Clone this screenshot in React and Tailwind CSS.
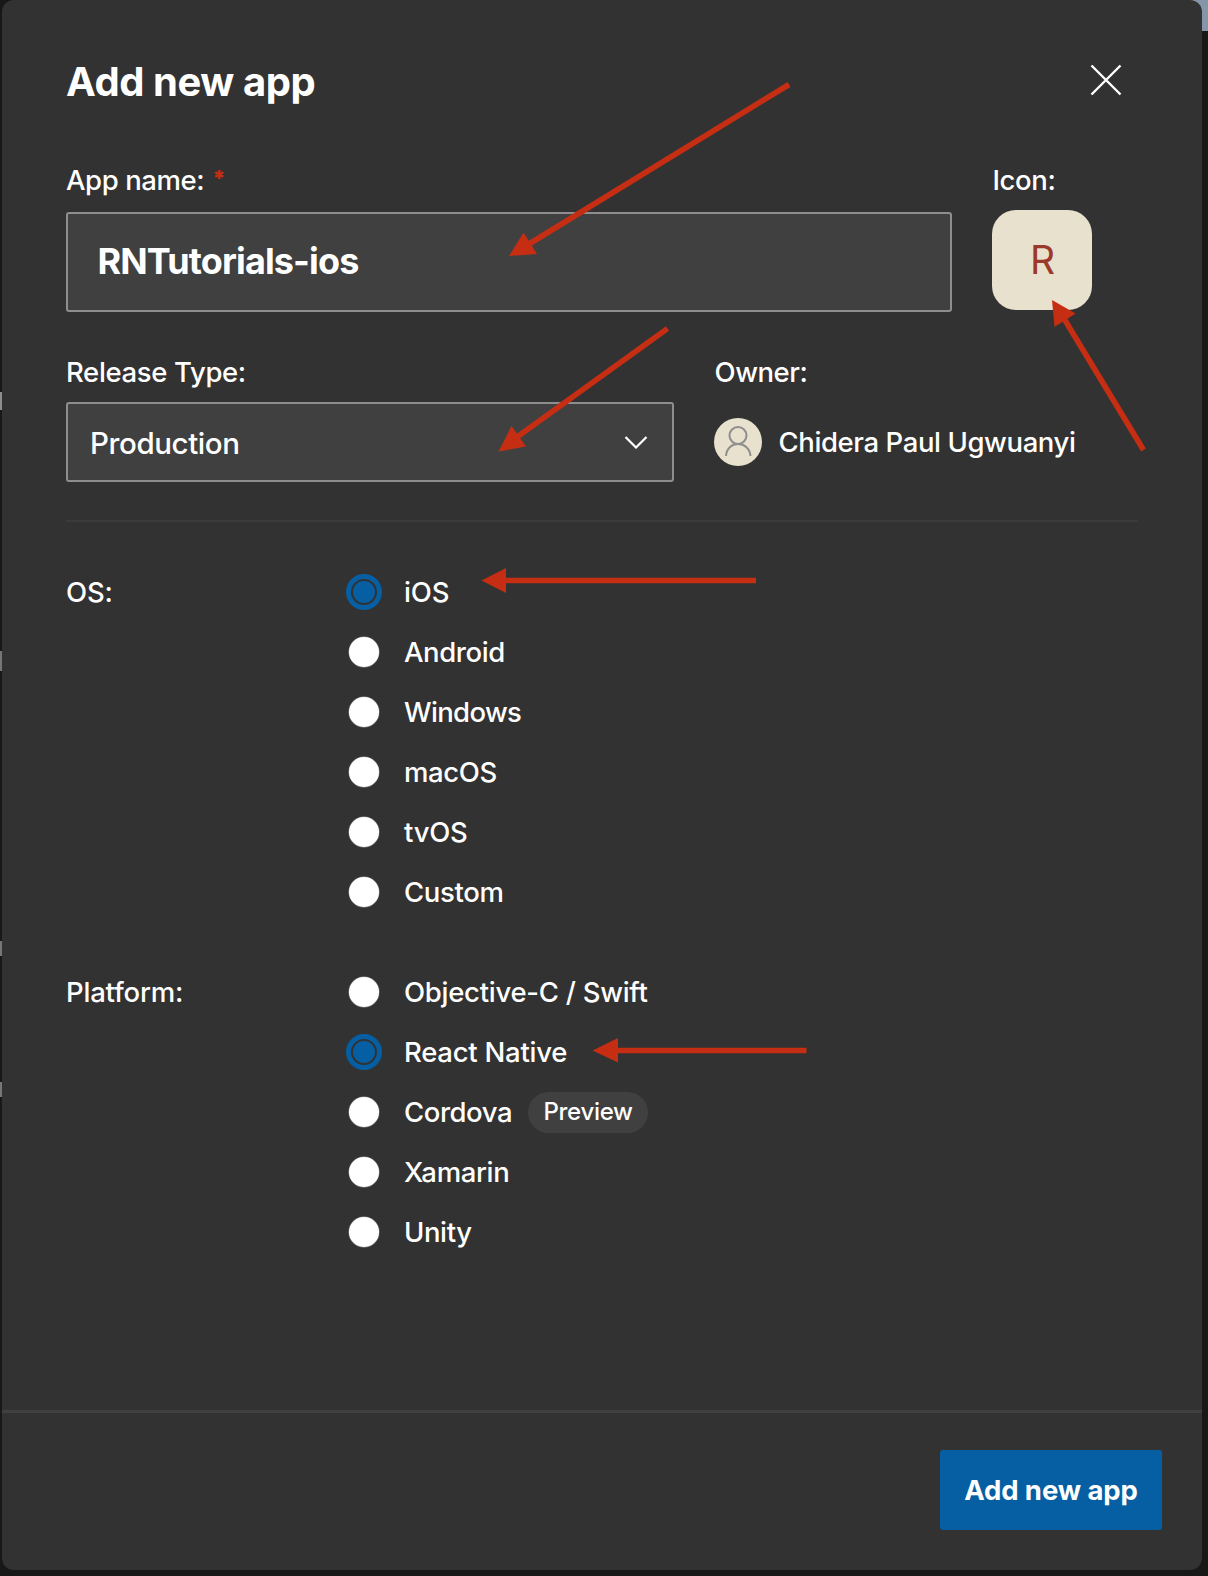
const OS_OPTIONS = [
  { label: "iOS", checked: true, spacing: "tracking-[-0.1px]" },
  { label: "Android", spacing: "tracking-[-0.4px]" },
  { label: "Windows", spacing: "tracking-[-0.65px]" },
  { label: "macOS", spacing: "tracking-[-0.35px]" },
  { label: "tvOS", spacing: "tracking-[-0.25px]" },
  { label: "Custom", spacing: "tracking-[-0.35px]" },
];

const PLATFORM_OPTIONS = [
  { label: "Objective-C / Swift", spacing: "tracking-[-0.27px]" },
  { label: "React Native", checked: true, spacing: "tracking-[-0.25px]" },
  { label: "Cordova", badge: "Preview", spacing: "tracking-[-0.45px]" },
  { label: "Xamarin", spacing: "tracking-[-0.35px]" },
  { label: "Unity", spacing: "tracking-[-0.4px]" },
];

function Radio({ checked }) {
  if (checked) {
    return (
      <span className="flex size-[36px] items-center justify-center rounded-full border-[5px] border-[#065fa3]">
        <span className="size-[22px] rounded-full bg-[#065fa3]" />
      </span>
    );
  }
  return <span className="size-[30px] rounded-full bg-white ring-[0.5px] ring-[#8e8e8e]" />;
}

function RadioGroup({ title, options }) {
  return (
    <div className="flex">
      <div className="h-[60px] w-[280px] leading-[60px] tracking-[-0.2px]">{title}</div>
      <div>
        {options.map((o) => (
          <label key={o.label} className="flex h-[60px] items-center">
            <span className="flex w-[36px] items-center justify-center">
              <Radio checked={o.checked} />
            </span>
            <span className={"ml-[22px] pt-[2px] " + o.spacing}>{o.label}</span>
            {o.badge && (
              <span className="ml-[16px] flex h-[41px] w-[120px] items-center justify-center rounded-full bg-[#404040] pb-[1px] text-[24px] tracking-[-0.3px]">
                {o.badge}
              </span>
            )}
          </label>
        ))}
      </div>
    </div>
  );
}

function Arrows() {
  return (
    <svg className="pointer-events-none absolute top-0 left-0" width="1208" height="1576" fill="#c52e13" stroke="#c52e13">
      <g strokeWidth="5.6">
        <path d="M789 84.5 529 244" />
        <path d="M667.5 328.5 517 437" />
        <path d="M1143.500 450 1063 317" />
        <path d="M756 580.500H504" />
        <path d="M806.500 1050.500H615" />
      </g>
      <g stroke="none">
        <path d="M509 256 523.500 232.500 537 254Z" />
        <path d="M498.500 451.500 511.500 426 526 446.500Z" />
        <path d="M1052 300 1075.500 313.500 1054.500 327Z" />
        <path d="M481.500 580.500 506 568V593Z" />
        <path d="M592.500 1050.500 618 1038V1062.500Z" />
      </g>
    </svg>
  );
}

export default function App() {
  return (
    <div className="relative h-[1576px] w-[1208px] overflow-hidden bg-[#181818] pl-[2px] font-['Inter',sans-serif] text-[27.5px] font-medium text-white">
      <div className="absolute top-0 right-0 h-[31px] w-[20px] bg-[#8496a8]" />
      <div className="absolute top-[392px] left-0 h-[18px] w-[2px] bg-[#8e8e8e]" />
      <div className="absolute top-[651px] left-0 h-[20px] w-[2px] bg-[#777777]" />
      <div className="absolute top-[941px] left-0 h-[15px] w-[2px] bg-[#777777]" />
      <div className="absolute top-[1082px] left-0 h-[15px] w-[2px] bg-[#777777]" />
      <div className="relative flex h-[1570px] w-[1200px] flex-col rounded-[12px] bg-[#323232]">
        <div className="flex h-[1410px] flex-col px-[64px]">
          <header className="flex h-[160px] items-center justify-between">
            <h1 className="pt-[3px] text-[40px] font-bold tracking-[-0.45px]">Add new app</h1>
            <svg className="mr-[16px]" width="32" height="32" fill="none" stroke="#fff" strokeWidth="2.4">
              <path d="M1.500 1.500 30.500 30.500M30.500 1.500 1.500 30.500" />
            </svg>
          </header>

          <div className="flex">
            <div className="w-[926px]">
              <div className="flex h-[41px] leading-[41px] tracking-[-0.4px]">
                App name:<span className="ml-[8px] text-[22px] leading-[37px] font-black text-[#c52e13]">*</span>
              </div>
              <div className="mt-[11px] flex h-[100px] w-[886px] items-center rounded-[3px] border-2 border-[#8e8e8e] bg-[#404040] pb-[2px] pl-[29.5px] text-[36px] font-bold tracking-[-0.88px]">
                RNTutorials-ios
              </div>
            </div>
            <div>
              <div className="h-[41px] pl-[0.5px] leading-[41px] tracking-[-0.4px]">Icon:</div>
              <div className="mt-[9px] flex size-[100px] items-center justify-center rounded-[24px] bg-[#e8e1ce] pl-[1px] text-[39px] font-normal text-[#9c3a2a]">
                R
              </div>
            </div>
          </div>

          <div className="mt-[40px] flex">
            <div className="w-[648px]">
              <div className="h-[41px] leading-[41px] tracking-[-0.35px]">Release Type:</div>
              <div className="mt-[9px] flex h-20 w-[608px] items-center justify-between rounded-[3px] border-2 border-[#8e8e8e] bg-[#404040] pr-[24px] pl-[22px] text-[29.5px] tracking-[-0.4px]">
                <span className="pt-[3px]">Production</span>
                <svg width="24" height="14" fill="none" stroke="#fff" strokeWidth="2.2">
                  <path d="M1.500 2 12 12.500 22.500 2" />
                </svg>
              </div>
            </div>
            <div>
              <div className="h-[41px] pl-[0.5px] leading-[41px] tracking-[-0.45px]">Owner:</div>
              <div className="mt-[25px] flex h-12 items-center">
                <svg width="48" height="48" fill="none" stroke="#8e8e8e" strokeWidth="2">
                  <circle cx="24" cy="24" r="24" fill="#e8e1ce" stroke="none" />
                  <circle cx="24" cy="17.500" r="8.500" />
                  <path d="M12 38C12.500 30.500 17.500 26 24 26S36 30.500 36.500 38" />
                </svg>
                <span className="ml-[16.5px] pt-[2px] tracking-[-0.4px]">Chidera Paul Ugwuanyi</span>
              </div>
            </div>
          </div>

          <div className="mt-[38px] mb-[40px] h-[2px] w-[1072px] bg-[#3b3b3b]" />

          <RadioGroup title="OS:" options={OS_OPTIONS} />
          <div className="h-10 shrink-0" />
          <RadioGroup title="Platform:" options={PLATFORM_OPTIONS} />
        </div>

        <footer className="flex h-[160px] justify-end border-t-[3px] border-[#404040] pt-[37px] pr-[40px]">
          <button className="h-20 w-[222px] rounded-[3px] bg-[#065fa3] pt-[2px] text-[27.5px] font-bold tracking-[-0.1px]">Add new app</button>
        </footer>
      </div>
      <Arrows />
    </div>
  );
}
